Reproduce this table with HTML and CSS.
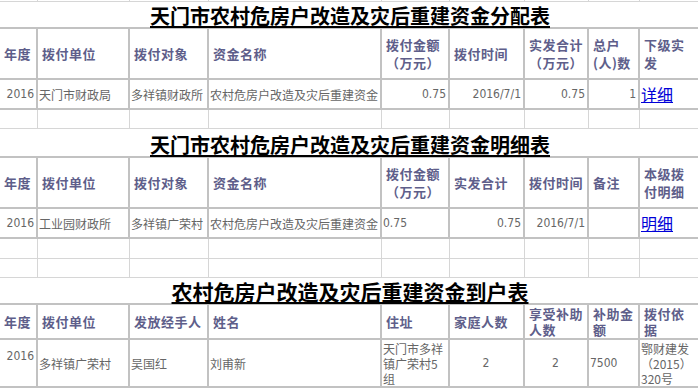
FILE: index.html
```html
<!DOCTYPE html>
<html lang="zh-CN">
<head>
<meta charset="utf-8">
<title>资金分配表</title>
<link rel="stylesheet" href="styles.css">
</head>
<body>
<div class="sheet">
  <div class="c e"></div><div class="c e"></div><div class="c e"></div><div class="c e"></div><div class="c e"></div><div class="c e"></div><div class="c e"></div><div class="c e"></div><div class="c e"></div>

  <div class="title"><span>天门市农村危房户改造及灾后重建资金分配表</span></div>

  <div class="c h">年度</div>
  <div class="c h">拨付单位</div>
  <div class="c h">拨付对象</div>
  <div class="c h">资金名称</div>
  <div class="c h">拨付金额<br>（万元）</div>
  <div class="c h">拨付时间</div>
  <div class="c h">实发合计<br>（万元）</div>
  <div class="c h">总户<br>(人)数</div>
  <div class="c h">下级实<br>发</div>

  <div class="c d r num">2016</div>
  <div class="c d">天门市财政局</div>
  <div class="c d">多祥镇财政所</div>
  <div class="c d">农村危房户改造及灾后重建资金</div>
  <div class="c d r num">0.75</div>
  <div class="c d r num">2016/7/1</div>
  <div class="c d r num">0.75</div>
  <div class="c d r num">1</div>
  <div class="c d"><a class="link" href="#">详细</a></div>

  <div class="c e"></div><div class="c e"></div><div class="c e"></div><div class="c e"></div><div class="c e"></div><div class="c e"></div><div class="c e"></div><div class="c e"></div><div class="c e"></div>

  <div class="title"><span>天门市农村危房户改造及灾后重建资金明细表</span></div>

  <div class="c h">年度</div>
  <div class="c h">拨付单位</div>
  <div class="c h">拨付对象</div>
  <div class="c h">资金名称</div>
  <div class="c h">拨付金额<br>（万元）</div>
  <div class="c h">实发合计</div>
  <div class="c h">拨付时间</div>
  <div class="c h">备注</div>
  <div class="c h">本级拨<br>付明细</div>

  <div class="c d r num">2016</div>
  <div class="c d">工业园财政所</div>
  <div class="c d">多祥镇广荣村</div>
  <div class="c d">农村危房户改造及灾后重建资金</div>
  <div class="c d num">0.75</div>
  <div class="c d r num">0.75</div>
  <div class="c d r num">2016/7/1</div>
  <div class="c d"></div>
  <div class="c d"><a class="link" href="#">明细</a></div>

  <div class="c e"></div><div class="c e"></div><div class="c e"></div><div class="c e"></div><div class="c e"></div><div class="c e"></div><div class="c e"></div><div class="c e"></div><div class="c e"></div>
  <div class="c e"></div><div class="c e"></div><div class="c e"></div><div class="c e"></div><div class="c e"></div><div class="c e"></div><div class="c e"></div><div class="c e"></div><div class="c e"></div>

  <div class="title big"><span>农村危房户改造及灾后重建资金到户表</span></div>

  <div class="c h tight">年度</div>
  <div class="c h tight">拨付单位</div>
  <div class="c h tight">发放经手人</div>
  <div class="c h tight">姓名</div>
  <div class="c h tight">住址</div>
  <div class="c h tight">家庭人数</div>
  <div class="c h tight">享受补助<br>人数</div>
  <div class="c h tight">补助金<br>额</div>
  <div class="c h tight">拨付依<br>据</div>

  <div class="c d r num top">2016</div>
  <div class="c d">多祥镇广荣村</div>
  <div class="c d">吴国红</div>
  <div class="c d">刘甫新</div>
  <div class="c d top wrap">天门市多祥<br>镇广荣村5<br>组</div>
  <div class="c d mid num">2</div>
  <div class="c d mid num">2</div>
  <div class="c d num">7500</div>
  <div class="c d top wrap">鄂财建发<br>（2015）<br>320号</div>
</div>
</body>
</html>
```
FILE: styles.css
```css
html, body {
  margin: 0;
  padding: 0;
  background: #ffffff;
  overflow: hidden;
}

.sheet {
  display: grid;
  width: 700px;
  grid-template-columns: 38px 92px 79px 173px 68px 75px 64px 51px 60px;
  grid-template-rows: 2px 27px 51px 30px 19px 29px 51px 30px 20px 19px 27px 35px 48px;
  font-family: "Noto Sans CJK SC", sans-serif;
}

.c {
  box-sizing: border-box;
  display: flex;
  align-items: center;
  overflow: hidden;
  border-right: 2px solid #c2c2c2;
  border-bottom: 2px solid #c2c2c2;
  white-space: nowrap;
}

.e {
  border-right: 1px solid #d6d6d6;
  border-bottom: 1px solid #d6d6d6;
}

.title {
  grid-column: 1 / -1;
  box-sizing: border-box;
  display: flex;
  justify-content: center;
  align-items: flex-end;
  border-bottom: 2px solid #c2c2c2;
  font-size: 20px;
  line-height: 23px;
  font-weight: 700;
  color: #000;
}

.title span {
  text-decoration: underline;
  text-underline-offset: 2px;
}

.title.big {
  font-size: 21px;
}

.h {
  padding-left: 4px;
  font-size: 13px;
  line-height: 18px;
  font-weight: 700;
  letter-spacing: 0.5px;
  color: #5e5e8a;
}

.h.tight {
  line-height: 16px;
}

.d {
  padding: 0 2px 0 1px;
  font-size: 12px;
  line-height: 15px;
  color: #666666;
}

.num {
  font-family: "DejaVu Sans Condensed", "Liberation Sans", "Noto Sans CJK SC", sans-serif;
}

.r {
  justify-content: flex-end;
}

.mid {
  justify-content: center;
}

.top {
  align-items: flex-start;
  padding-top: 1px;
}

.r.top {
  padding-top: 9px;
}

.wrap {
  white-space: normal;
}

.link {
  font-size: 16px;
  color: #0000d8;
  text-decoration: underline;
}
```
